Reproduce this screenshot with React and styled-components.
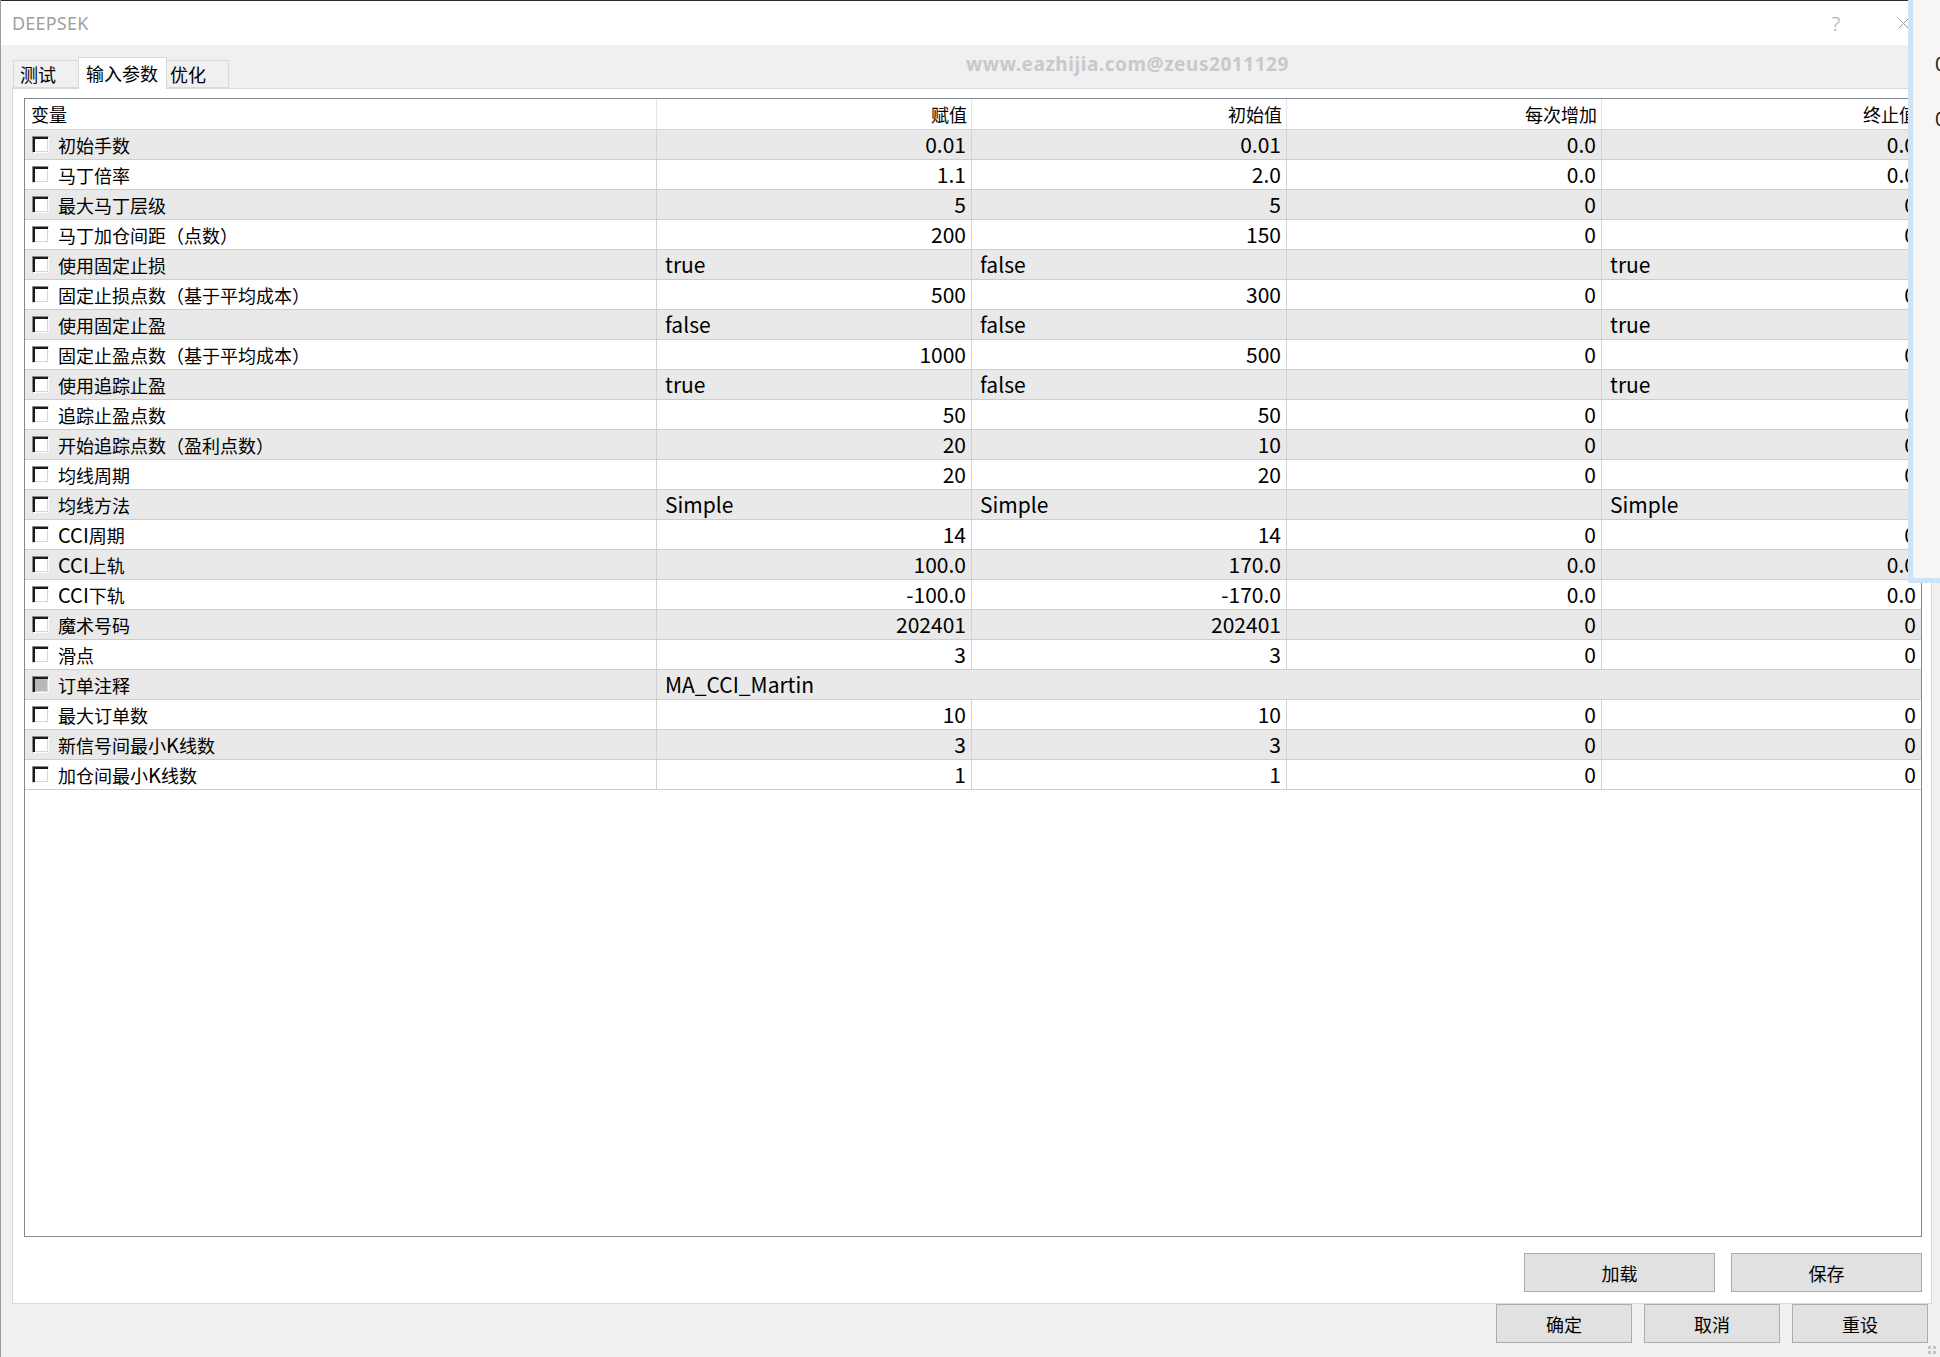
import React from 'react';
import styled, { createGlobalStyle } from 'styled-components';

const GlobalStyle = createGlobalStyle`
  html, body {
    margin: 0;
    padding: 0;
    background: #f0f0f0;
  }
  body {
    font-family: "Noto Sans CJK SC", "Noto Sans", sans-serif;
    color: #000;
  }
`;

const Window = styled.div`
  position: relative;
  width: 1940px;
  height: 1357px;
  box-sizing: border-box;
  background: #f0f0f0;
  border-left: 1px solid #9c9c9c;
  overflow: hidden;
  display: flex;
  flex-direction: column;
`;

const TitleBar = styled.div`
  height: 45px;
  box-sizing: border-box;
  border-top: 1px solid #2b2b2b;
  background: #fff;
  display: flex;
  align-items: center;
  padding: 0 31px 0 11px;
  flex-shrink: 0;
`;

const Title = styled.span`
  font-family: "Noto Sans", "Open Sans", sans-serif;
  font-size: 18px;
  color: #a0a0a0;
  letter-spacing: 0.2px;
`;

const TitleControls = styled.div`
  margin-left: auto;
  display: flex;
  align-items: center;
  gap: 57px;
`;

const Help = styled.span`
  font-family: "Noto Sans", sans-serif;
  font-weight: 300;
  font-size: 20px;
  color: #a8a8a8;
  width: 10px;
  text-align: center;
`;

const TabStrip = styled.div`
  height: 43px;
  display: flex;
  align-items: flex-end;
  padding-left: 12px;
  flex-shrink: 0;
`;

const Tab = styled.div`
  position: relative;
  box-sizing: border-box;
  width: ${(p) => p.$width}px;
  height: ${(p) => (p.$active ? 32 : 28)}px;
  margin-left: ${(p) => (p.$first ? 0 : -1)}px;
  margin-bottom: ${(p) => (p.$active ? -1 : 0)}px;
  padding-left: ${(p) => p.$pad}px;
  border: 1px solid #d9d9d9;
  border-bottom: ${(p) => (p.$active ? 'none' : '1px solid #d9d9d9')};
  background: ${(p) => (p.$active ? '#fff' : '#f0f0f0')};
  z-index: ${(p) => (p.$active ? 2 : 1)};
  font-size: 18px;
  line-height: 27px;
  display: flex;
  align-items: center;
`;

const Watermark = styled.div`
  position: absolute;
  left: 965px;
  top: 51px;
  font-family: "Noto Sans", sans-serif;
  font-weight: 700;
  font-size: 19px;
  line-height: 26px;
  color: #c9c9c9;
  letter-spacing: 0.55px;
`;

const Panel = styled.div`
  height: 1216px;
  box-sizing: border-box;
  margin: 0 8px 0 11px;
  padding: 9px 9px 11px 11px;
  background: #fff;
  border: 1px solid #d9d9d9;
  display: flex;
  flex-direction: column;
  flex-shrink: 0;
`;

const Table = styled.div`
  flex: 1;
  border: 1px solid #828790;
  background: #fff;
  display: flex;
  flex-direction: column;
  overflow: hidden;
`;

const COLS = '632px 315px 315px 315px 1fr';

const HeaderRow = styled.div`
  display: grid;
  grid-template-columns: ${COLS};
  height: 31px;
  box-sizing: border-box;
  border-bottom: 1px solid #d5d5d5;
  font-size: 18px;
`;

const HeaderCell = styled.div`
  display: flex;
  align-items: center;
  justify-content: ${(p) => (p.$align === 'right' ? 'flex-end' : 'flex-start')};
  padding: 0 4px 0 6px;
  border-right: ${(p) => (p.$last ? 'none' : '1px solid #e5e5e5')};
  overflow: hidden;
  white-space: nowrap;
`;

const Row = styled.div`
  display: grid;
  grid-template-columns: ${(p) => (p.$merged ? '632px 1fr' : COLS)};
  height: 30px;
  box-sizing: border-box;
  border-bottom: 1px solid #cdcdcd;
  background: ${(p) => (p.$shaded ? '#e9e9e9' : '#fff')};
`;

const NameCell = styled.div`
  display: flex;
  align-items: center;
  padding-left: 7px;
  gap: 9px;
  font-size: 18px;
  border-right: 1px solid #d2d2d2;
  white-space: nowrap;
  overflow: hidden;
`;

const Label = styled.span`
  line-height: 28px;
`;

const Latin = styled.span`
  font-size: 20px;
`;

const ValueCell = styled.div`
  display: flex;
  align-items: center;
  justify-content: ${(p) => (p.$align === 'left' ? 'flex-start' : 'flex-end')};
  padding: 0 5px 1px 8px;
  font-size: 21px;
  border-right: ${(p) => (p.$last ? 'none' : '1px solid #d2d2d2')};
  white-space: nowrap;
  overflow: hidden;
`;

const Checkbox = styled.span`
  width: 17px;
  height: 17px;
  flex-shrink: 0;
  box-sizing: border-box;
  border-top: 1px solid #8a8a8a;
  border-left: 1px solid #8a8a8a;
  border-right: 1px solid #fdfdfd;
  border-bottom: 1px solid #fdfdfd;
  box-shadow: inset 2px 2px 0 #1a1a1a, inset -1px -1px 0 #d8d8d8;
  background: ${(p) => (p.$disabled ? '#b8b8b8' : '#fff')};
`;

const FileButtons = styled.div`
  display: flex;
  justify-content: flex-end;
  gap: 16px;
  margin-top: 16px;
`;

const Button = styled.button`
  width: ${(p) => p.$width}px;
  height: 39px;
  box-sizing: border-box;
  background: #e1e1e1;
  border: 1px solid #adadad;
  border-radius: 0;
  padding: 0;
  font-family: "Noto Sans CJK SC", sans-serif;
  font-size: 18px;
  color: #000;
`;

const DialogButtons = styled.div`
  display: flex;
  justify-content: flex-end;
  gap: 12px;
  padding-right: 12px;
  flex-shrink: 0;
`;

const SideWindow = styled.div`
  position: absolute;
  top: 0;
  right: 0;
  width: 32px;
  height: 583px;
  box-sizing: border-box;
  background: #f6f6f6;
  border-left: 5px solid #cde3f6;
  border-bottom: 5px solid #cde3f6;
  padding: 50px 0 0 22px;
  overflow: hidden;
  z-index: 5;
`;

const SideLine = styled.div`
  font-size: 19px;
  line-height: 26px;
  height: 55px;
  color: #222;
`;

const Grip = styled.svg`
  position: absolute;
  right: 2px;
  bottom: 2px;
`;

const params = [
  { name: '初始手数', value: '0.01', start: '0.01', step: '0.0', stop: '0.0' },
  { name: '马丁倍率', value: '1.1', start: '2.0', step: '0.0', stop: '0.0' },
  { name: '最大马丁层级', value: '5', start: '5', step: '0', stop: '0' },
  { name: '马丁加仓间距（点数）', value: '200', start: '150', step: '0', stop: '0' },
  { name: '使用固定止损', value: 'true', start: 'false', stop: 'true', kind: 'enum' },
  { name: '固定止损点数（基于平均成本）', value: '500', start: '300', step: '0', stop: '0' },
  { name: '使用固定止盈', value: 'false', start: 'false', stop: 'true', kind: 'enum' },
  { name: '固定止盈点数（基于平均成本）', value: '1000', start: '500', step: '0', stop: '0' },
  { name: '使用追踪止盈', value: 'true', start: 'false', stop: 'true', kind: 'enum' },
  { name: '追踪止盈点数', value: '50', start: '50', step: '0', stop: '0' },
  { name: '开始追踪点数（盈利点数）', value: '20', start: '10', step: '0', stop: '0' },
  { name: '均线周期', value: '20', start: '20', step: '0', stop: '0' },
  { name: '均线方法', value: 'Simple', start: 'Simple', stop: 'Simple', kind: 'enum' },
  { name: 'CCI周期', value: '14', start: '14', step: '0', stop: '0' },
  { name: 'CCI上轨', value: '100.0', start: '170.0', step: '0.0', stop: '0.0' },
  { name: 'CCI下轨', value: '-100.0', start: '-170.0', step: '0.0', stop: '0.0' },
  { name: '魔术号码', value: '202401', start: '202401', step: '0', stop: '0' },
  { name: '滑点', value: '3', start: '3', step: '0', stop: '0' },
  { name: '订单注释', value: 'MA_CCI_Martin', kind: 'text' },
  { name: '最大订单数', value: '10', start: '10', step: '0', stop: '0' },
  { name: '新信号间最小K线数', value: '3', start: '3', step: '0', stop: '0' },
  { name: '加仓间最小K线数', value: '1', start: '1', step: '0', stop: '0' },
];

// latin runs inside a name render a little larger, like the system UI font does
function ParamName({ text }) {
  return (
    <Label>
      {text.split(/([A-Za-z]+)/).map((part, i) =>
        /^[A-Za-z]+$/.test(part) ? <Latin key={i}>{part}</Latin> : part
      )}
    </Label>
  );
}

function ParamRow({ p, index }) {
  const shaded = index % 2 === 0;

  if (p.kind === 'text') {
    return (
      <Row $shaded={shaded} $merged>
        <NameCell>
          <Checkbox $disabled />
          <ParamName text={p.name} />
        </NameCell>
        <ValueCell $align="left" $last>{p.value}</ValueCell>
      </Row>
    );
  }

  const align = p.kind === 'enum' ? 'left' : 'right';
  return (
    <Row $shaded={shaded}>
      <NameCell>
        <Checkbox />
        <ParamName text={p.name} />
      </NameCell>
      <ValueCell $align={align}>{p.value}</ValueCell>
      <ValueCell $align={align}>{p.start}</ValueCell>
      <ValueCell $align={align}>{p.step}</ValueCell>
      <ValueCell $align={align} $last>{p.stop}</ValueCell>
    </Row>
  );
}

function App() {
  return (
    <>
      <GlobalStyle />
      <Window>
        <TitleBar>
          <Title>DEEPSEK</Title>
          <TitleControls>
            <Help>?</Help>
            <svg width="11" height="11" viewBox="0 0 11 11">
              <path d="M0.5 0.5 L10.5 10.5 M10.5 0.5 L0.5 10.5" stroke="#9a9a9a" strokeWidth="1" />
            </svg>
          </TitleControls>
        </TitleBar>

        <TabStrip>
          <Tab $first $width={66} $pad={6}>测试</Tab>
          <Tab $active $width={89} $pad={7}>输入参数</Tab>
          <Tab $width={63} $pad={3}>优化</Tab>
        </TabStrip>
        <Watermark>www.eazhijia.com@zeus2011129</Watermark>

        <Panel>
          <Table>
            <HeaderRow>
              <HeaderCell>变量</HeaderCell>
              <HeaderCell $align="right">赋值</HeaderCell>
              <HeaderCell $align="right">初始值</HeaderCell>
              <HeaderCell $align="right">每次增加</HeaderCell>
              <HeaderCell $align="right" $last>终止值</HeaderCell>
            </HeaderRow>
            {params.map((p, i) => (
              <ParamRow key={p.name} p={p} index={i} />
            ))}
          </Table>
          <FileButtons>
            <Button $width={191}>加载</Button>
            <Button $width={191}>保存</Button>
          </FileButtons>
        </Panel>

        <DialogButtons>
          <Button $width={136}>确定</Button>
          <Button $width={136}>取消</Button>
          <Button $width={136}>重设</Button>
        </DialogButtons>

        <SideWindow>
          <SideLine>0</SideLine>
          <SideLine>0</SideLine>
        </SideWindow>

        <Grip width="10" height="10" viewBox="0 0 10 10">
          <rect x="0" y="1" width="3" height="3" fill="#c4c4c4" />
          <rect x="5" y="1" width="3" height="3" fill="#c4c4c4" />
          <rect x="0" y="6" width="3" height="3" fill="#c4c4c4" />
          <rect x="5" y="6" width="3" height="3" fill="#c4c4c4" />
        </Grip>
      </Window>
    </>
  );
}

export default App;
